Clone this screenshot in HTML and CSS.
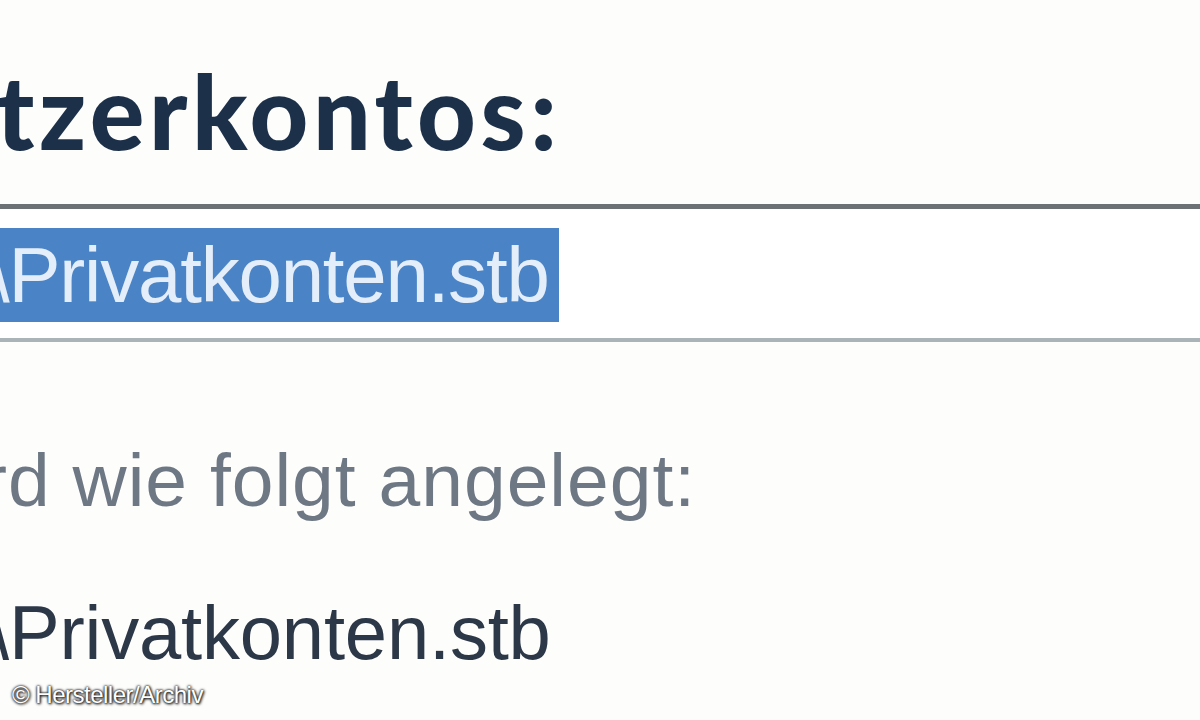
FILE: index.html
```html
<!DOCTYPE html>
<html lang="de">
<head>
<meta charset="utf-8">
<title>Benutzerkontos</title>
<link rel="stylesheet" href="styles.css">
</head>
<body>
<div class="page">
  <h1 class="heading"><span class="clip clip-head">tzerkontos:</span></h1>
  <div class="field">
    <span class="selection"><span class="clip clip-sel">\Privatkonten.stb</span></span>
  </div>
  <p class="note"><span class="clip clip-note">rd wie folgt angelegt:</span></p>
  <p class="path"><span class="clip clip-path">\Privatkonten.stb</span></p>
  <div class="credit">© Hersteller/Archiv</div>
</div>
</body>
</html>
```

FILE: styles.css
```css
html, body {
  margin: 0;
  padding: 0;
  background: #fdfdfc;
}
.page {
  position: relative;
  width: 1200px;
  height: 720px;
  overflow: hidden;
  background: #fdfdfc;
}
.clip {
  display: inline-block;
}
.heading {
  margin: 51px 0 0 0;
  font-family: "Lato", sans-serif;
  font-weight: 900;
  font-size: 102px;
  line-height: 120px;
  color: #1c3049;
  white-space: nowrap;
}
.clip-head {
  margin-left: -4px;
  letter-spacing: 4.5px;
}
.field {
  margin-top: 33px;
  border-top: 5px solid #6c7176;
  border-bottom: 4px solid #aab3b8;
  background: #ffffff;
  height: 110px;
  padding-top: 19px;
  box-sizing: content-box;
  white-space: nowrap;
}
.selection {
  display: inline-block;
  background: #4a84c6;
  color: #e4eefa;
  font-family: "Liberation Sans", Arial, sans-serif;
  font-size: 78px;
  line-height: 94px;
  height: 94px;
  padding-right: 10px;
}
.clip-sel {
  margin-left: -12px;
  letter-spacing: -1.2px;
}
.note {
  margin: 88px 0 0 0;
  font-family: "Liberation Sans", Arial, sans-serif;
  font-size: 75px;
  line-height: 100px;
  color: #6e7884;
  white-space: nowrap;
}
.clip-note {
  margin-left: -18px;
  letter-spacing: 1px;
}
.path {
  margin: 53px 0 0 0;
  font-family: "Liberation Sans", Arial, sans-serif;
  font-size: 76px;
  line-height: 100px;
  color: #2c3848;
  white-space: nowrap;
}
.clip-path {
  margin-left: -12px;
  letter-spacing: -0.2px;
}
.credit {
  position: absolute;
  left: 12px;
  top: 680px;
  font-family: "Liberation Sans", Arial, sans-serif;
  font-size: 24px;
  line-height: 30px;
  color: #ffffff;
  letter-spacing: -0.5px;
  text-shadow: 0 0 2px #222, 0 0 3px #333, 1px 1px 3px #000;
}
```
